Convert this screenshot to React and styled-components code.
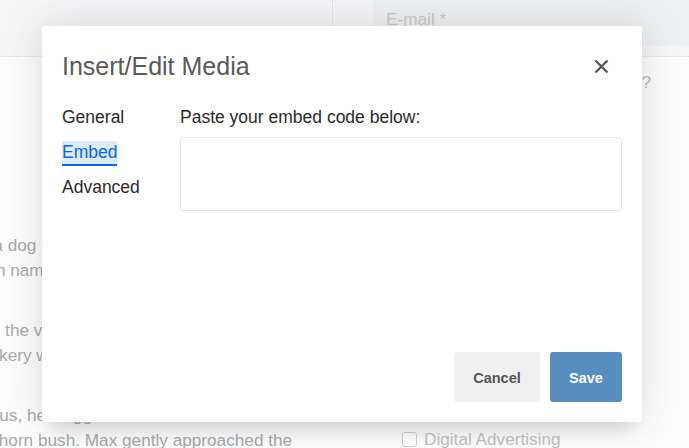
import React from "react";
import styled, { createGlobalStyle } from "styled-components";

const Global = createGlobalStyle`
  html, body { margin: 0; padding: 0; }
  body { font-family: "Liberation Sans", Arial, sans-serif; background: #fff; }
  * { box-sizing: border-box; }
`;

const Page = styled.div`
  position: relative;
  width: 689px;
  height: 448px;
  overflow: hidden;
  background: #fdfdfd;
  color: #a9a9a9;
  font-size: 17.2px;
  line-height: 25px;
`;

const TopBar = styled.div`
  display: grid;
  grid-template-columns: 333px 1fr;
  height: 57px;
  background: #f6f6f7;
  border-bottom: 1px dotted #d9d9d9;
`;

const TopLeft = styled.div`
  border-right: 1px dotted #d6d6d6;
  height: 26px;
`;

const TopRight = styled.div`
  padding-left: 40px;
`;

const EmailField = styled.div`
  height: 46px;
  background: #eff0f1;
  padding: 7px 0 0 13px;
  color: #c9c9c9;
`;

const Main = styled.div`
  display: grid;
  grid-template-columns: 373px 1fr;
`;

const Article = styled.div`
  padding-top: 176px;
  display: flex;
  flex-direction: column;
  gap: 35px;
`;

const Para = styled.div`
  display: flex;
  flex-direction: column;
`;

const Line = styled.div`
  white-space: nowrap;
  margin-left: ${(p) => p.$indent}px;
`;

const Side = styled.div`
  display: flex;
  flex-direction: column;
`;

const Question = styled.div`
  margin-top: 13px;
  white-space: nowrap;
  color: #b8b8b8;
`;

const CheckRow = styled.label`
  margin-top: 332px;
  margin-left: 29px;
  display: flex;
  align-items: center;
  gap: 7px;
  color: #c2c2c2;
  white-space: nowrap;
`;

const Box = styled.span`
  width: 15px;
  height: 15px;
  border: 1px solid #cfcfcf;
  border-radius: 3px;
  background: #fff;
`;

const Dialog = styled.div`
  position: absolute;
  top: 26px;
  left: 42px;
  width: 600px;
  height: 396px;
  background: #fff;
  border-radius: 3px;
  box-shadow: 0 16px 16px -10px rgba(34, 47, 62, 0.15),
    0 0 40px 1px rgba(34, 47, 62, 0.15);
  display: flex;
  flex-direction: column;
`;

const Header = styled.div`
  display: flex;
  align-items: center;
  justify-content: space-between;
  height: 60px;
  padding: 20px 20px 0;
`;

const Title = styled.h1`
  margin: 0;
  font-size: 25px;
  font-weight: 400;
  line-height: 1;
  color: #5a5a5a;
`;

const Close = styled.button`
  width: 28px;
  height: 28px;
  margin-right: 7px;
  padding: 0;
  border: 0;
  background: none;
  display: flex;
  align-items: center;
  justify-content: center;
  cursor: pointer;
`;

const Body = styled.div`
  display: flex;
  padding: 20px 20px 0;
`;

const Tabs = styled.div`
  flex: 0 0 118px;
  display: flex;
  flex-direction: column;
  align-items: flex-start;
  gap: 10px;
`;

const Tab = styled.div`
  font-size: 17.5px;
  line-height: 23px;
  color: ${(p) => (p.$active ? "#006ce7" : "#2a2a2a")};
  background: ${(p) => (p.$active ? "#dfe9f7" : "transparent")};
  border-bottom: 2px solid ${(p) => (p.$active ? "#006ce7" : "transparent")};
  cursor: pointer;
`;

const Panel = styled.div`
  flex: 1;
  display: flex;
  flex-direction: column;
`;

const Label = styled.label`
  font-size: 17.5px;
  line-height: 23px;
  color: #2a2a2a;
  margin-bottom: 8px;
`;

const TextArea = styled.textarea`
  width: 100%;
  height: 74px;
  border: 1px solid #e6e6e6;
  border-radius: 3px;
  resize: none;
  outline: none;
  font-family: inherit;
  font-size: 16px;
`;

const Footer = styled.div`
  margin-top: auto;
  display: flex;
  justify-content: flex-end;
  gap: 10px;
  padding: 20px;
`;

const Button = styled.button`
  width: ${(p) => p.$w}px;
  height: 50px;
  border: 0;
  border-radius: 3px;
  padding: 1px 0 0;
  font-family: "Liberation Sans", Arial, sans-serif;
  font-weight: 700;
  font-size: 14.5px;
  background: ${(p) => (p.$primary ? "#588dbf" : "#f0f0f0")};
  color: ${(p) => (p.$primary ? "#fff" : "#555")};
  cursor: pointer;
`;

export default function App() {
  return (
    <>
      <Global />
      <Page>
        <TopBar>
          <TopLeft />
          <TopRight>
            <EmailField>E-mail *</EmailField>
          </TopRight>
        </TopBar>
        <Main>
          <Article>
            <Para>
              <Line $indent={-42}>was a dog named Max, a curious and playful golden retriever.</Line>
              <Line $indent={-28}>man named Charlie who owned the bakery in the old town.</Line>
            </Para>
            <Para>
              <Line $indent={-14}>to the village square where the smell of bread was warm.</Line>
              <Line $indent={-20}>bakery was always filled with laughter and fresh pastries.</Line>
            </Para>
            <Para>
              <Line $indent={-38}>curious, he wagged his tail and followed the sound to a</Line>
              <Line $indent={-6}>thorn bush. Max gently approached the</Line>
            </Para>
          </Article>
          <Side>
            <Question>What services are you interested in?</Question>
            <CheckRow>
              <Box />
              Digital Advertising
            </CheckRow>
          </Side>
        </Main>

        <Dialog role="dialog">
          <Header>
            <Title>Insert/Edit Media</Title>
            <Close aria-label="Close">
              <svg width="15" height="15" viewBox="0 0 15 15">
                <path d="M1.5 1.5 L13.5 13.5 M13.5 1.5 L1.5 13.5" stroke="#555" strokeWidth="2.3" strokeLinecap="butt" />
              </svg>
            </Close>
          </Header>
          <Body>
            <Tabs>
              <Tab>General</Tab>
              <Tab $active>Embed</Tab>
              <Tab>Advanced</Tab>
            </Tabs>
            <Panel>
              <Label>Paste your embed code below:</Label>
              <TextArea />
            </Panel>
          </Body>
          <Footer>
            <Button $w={86}>Cancel</Button>
            <Button $w={72} $primary>Save</Button>
          </Footer>
        </Dialog>
      </Page>
    </>
  );
}
